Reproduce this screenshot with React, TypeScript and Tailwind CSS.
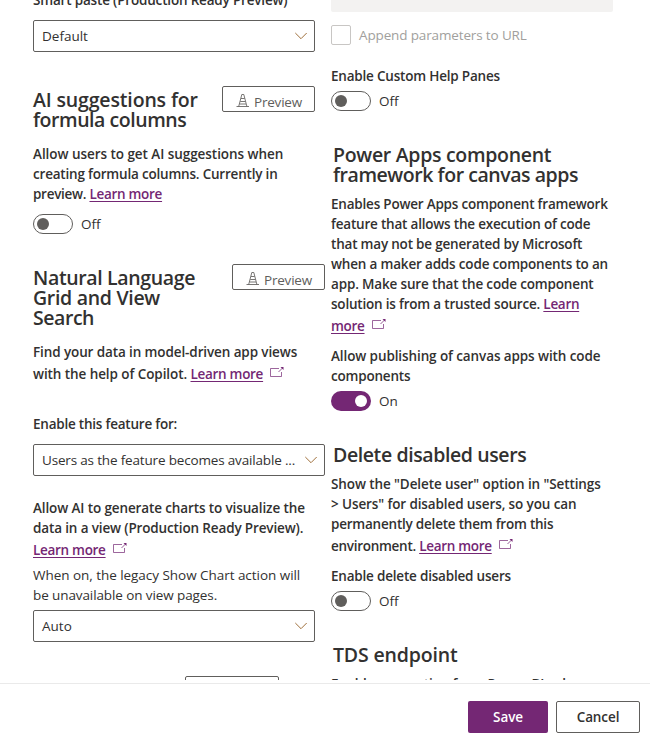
import type { ReactNode } from 'react';

function Line({ children, className = '' }: { children: ReactNode; className?: string }) {
  return <div className={`h-5 text-[13.5px] leading-5 font-semibold whitespace-pre ${className}`}>{children}</div>;
}

function Heading({ children, className = '' }: { children: ReactNode; className?: string }) {
  return <h2 className={`text-[19.5px] leading-5 font-semibold whitespace-pre ${className}`}>{children}</h2>;
}

function Link({ children }: { children: ReactNode }) {
  return <a className="tracking-[-0.3px] text-[#742774] underline decoration-1 underline-offset-2">{children}</a>;
}

function OpenIcon() {
  return (
    <svg className="ml-1.5 inline-block h-3 w-4 -translate-y-px align-baseline" viewBox="0 0 16 12" fill="none" stroke="#742774">
      <path d="M10 2.5H1.5v8h11V6" strokeWidth="1" opacity=".7" />
      <path d="M9.5 6 13.5 2" strokeWidth="1" opacity=".75" />
      <path d="M11.5 1h3v3z" fill="#742774" stroke="none" />
    </svg>
  );
}

function Chevron() {
  return (
    <svg className="h-2 w-3.5 shrink-0" viewBox="0 0 14 8" fill="none" stroke="#a0703c" strokeWidth="1">
      <path d="M1.3 1 7 6.7 12.7 1" />
    </svg>
  );
}

function Select({ value, className = '', textClass = '' }: { value: string; className?: string; textClass?: string }) {
  return (
    <div className={`flex h-8 items-center justify-between rounded-xs border border-[#605e5c] pr-1.5 pl-2 text-[13.5px] ${className}`}>
      <span className={`whitespace-pre ${textClass}`}>{value}</span>
      <Chevron />
    </div>
  );
}

function Toggle({ on = false }: { on?: boolean }) {
  return (
    <div className="flex h-5 items-center gap-2 text-[13.5px]">
      <span
        className={
          on
            ? 'flex h-5 w-10 items-center justify-end rounded-full bg-[#742774] px-1'
            : 'flex h-5 w-10 items-center rounded-full border border-[#605e5c] px-[3px]'
        }
      >
        <span className={on ? 'size-3 rounded-full bg-white' : 'size-3 rounded-full bg-[#605e5c]'} />
      </span>
      <span>{on ? 'On' : 'Off'}</span>
    </div>
  );
}

function PreviewBadge() {
  return (
    <div className="flex h-[26px] w-[93px] shrink-0 items-center rounded-xs border border-[#605e5c] pt-[7px] pl-[13px] text-[13.5px] tracking-[-0.2px] text-[#605e5c]">
      <svg className="mr-1 -mt-[5px] h-[14px] w-[14px]" viewBox="0 0 14 14" fill="none" stroke="#605e5c" strokeWidth="1">
        <path d="M.5 13.5h12.5M2.7 13.5 5.8 1.5h2l3.1 12M5 5.5h3.6M4.3 8.5h5M3.6 11h6.4" opacity=".85" />
      </svg>
      Preview
    </div>
  );
}

export default function App() {
  return (
    <div className="h-[737px] w-[650px] overflow-hidden bg-white font-['Open_Sans','Noto_Sans',sans-serif] text-[#323130]">
      <main className="flex h-[680px] gap-4 overflow-hidden pl-[33px]">
        <section className="w-[282px] shrink-0">
          <Line className="-mt-2.5 tracking-[-0.18px]">Smart paste (Production Ready Preview)</Line>
          <Select value="Default" className="mt-2.5" />

          <div className="mt-[34px] flex h-11 justify-between">
            <Heading className="mt-1">
              <span className="block tracking-[-0.15px]">AI suggestions for</span>
              <span className="block tracking-[-0.45px]">formula columns</span>
            </Heading>
            <PreviewBadge />
          </div>
          <div className="mt-3.5">
            <Line className="tracking-[-0.05px]">Allow users to get AI suggestions when</Line>
            <Line className="tracking-[-0.2px]">creating formula columns. Currently in</Line>
            <Line className="tracking-[-0.28px]">preview. <Link>Learn more</Link></Line>
          </div>
          <div className="mt-2.5"><Toggle /></div>

          <div className="mt-[30px] flex h-16 w-[292px] justify-between">
            <Heading className="mt-1">
              <span className="block tracking-[-0.35px]">Natural Language</span>
              <span className="block tracking-[-0.3px]">Grid and View</span>
              <span className="block tracking-[-0.45px]">Search</span>
            </Heading>
            <PreviewBadge />
          </div>
          <Line className="mt-3.5 tracking-[-0.11px]">Find your data in model-driven app views</Line>
          <Line className="mt-0.5 tracking-[-0.08px]">with the help of Copilot. <Link>Learn more</Link><OpenIcon /></Line>

          <Line className="mt-[30px] tracking-[-0.22px]">Enable this feature for:</Line>
          <Select value="Users as the feature becomes available ..." className="mt-2.5 w-[292px]" textClass="tracking-[-0.17px]" />

          <Line className="mt-[22px] tracking-[-0.12px]">Allow AI to generate charts to visualize the</Line>
          <Line className="tracking-[-0.14px]">data in a view (Production Ready Preview).</Line>
          <Line className="mt-0.5"><Link>Learn more</Link><OpenIcon /></Line>
          <p className="mt-[5px] text-[13.5px] leading-5 whitespace-pre">
            <span className="block tracking-[-0.04px]">When on, the legacy Show Chart action will</span>
            <span className="block tracking-[-0.1px]">be unavailable on view pages.</span>
          </p>
          <Select value="Auto" className="mt-[5px]" />
          <div className="mt-[34px] ml-[152px] h-[26px] w-[94px] rounded-xs border border-[#605e5c]" />
        </section>

        <section className="w-[282px] shrink-0">
          <div className="h-3 rounded-b-xs bg-[#f3f2f1]" />
          <div className="mt-[13px] flex h-5 items-center gap-2 text-[13.5px] text-[#a19f9d]">
            <span className="size-5 rounded-xs border border-[#c8c6c4]" />
            <span className="tracking-[-0.14px]">Append parameters to URL</span>
          </div>

          <Line className="mt-[21px] tracking-[-0.2px]">Enable Custom Help Panes</Line>
          <div className="mt-[5px]"><Toggle /></div>

          <Heading className="mt-[34px] ml-0.5">
            <span className="block tracking-[-0.3px]">Power Apps component</span>
            <span className="block tracking-[-0.45px]">framework for canvas apps</span>
          </Heading>
          <div className="mt-[9px]">
            <Line className="tracking-[-0.21px]">Enables Power Apps component framework</Line>
            <Line className="tracking-[-0.2px]">feature that allows the execution of code</Line>
            <Line className="tracking-[-0.2px]">that may not be generated by Microsoft</Line>
            <Line className="tracking-[-0.18px]">when a maker adds code components to an</Line>
            <Line className="tracking-[-0.16px]">app. Make sure that the code component</Line>
            <Line className="tracking-[-0.2px]">solution is from a trusted source. <Link>Learn</Link></Line>
            <Line className="mt-0.5"><Link>more</Link><OpenIcon /></Line>
          </div>
          <Line className="mt-2.5 tracking-[-0.1px]">Allow publishing of canvas apps with code</Line>
          <Line className="tracking-[-0.2px]">components</Line>
          <div className="mt-[5px]"><Toggle on /></div>

          <Heading className="mt-[34px] ml-0.5 tracking-[-0.4px]">Delete disabled users</Heading>
          <div className="mt-[9px]">
            <Line className="tracking-[-0.1px]">Show the "Delete user" option in "Settings</Line>
            <Line className="tracking-[-0.11px]">&gt; Users" for disabled users, so you can</Line>
            <Line className="tracking-[-0.22px]">permanently delete them from this</Line>
            <Line className="mt-0.5 tracking-[-0.28px]">environment. <Link>Learn more</Link><OpenIcon /></Line>
          </div>
          <Line className="mt-2.5 tracking-[-0.2px]">Enable delete disabled users</Line>
          <div className="mt-[5px]"><Toggle /></div>

          <Heading className="mt-[34px] ml-0.5 tracking-[-0.15px]">TDS endpoint</Heading>
          <Line className="mt-[9px] tracking-[-0.1px]">Enable connection from Power BI, when</Line>
        </section>
      </main>

      <footer className="mt-[3px] flex h-[54px] justify-end gap-2 border-t border-[#eaeaea] pt-[17px] pr-2.5 text-[13.5px] font-semibold tracking-[-0.1px]">
        <button className="h-8 w-20 rounded-xs bg-[#742774] text-white">Save</button>
        <button className="h-8 w-[84px] rounded-xs border border-[#605e5c]">Cancel</button>
      </footer>
    </div>
  );
}
